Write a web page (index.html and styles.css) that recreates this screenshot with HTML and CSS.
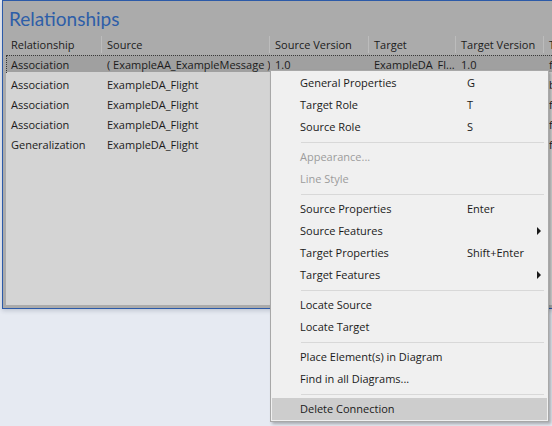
FILE: index.html
```html
<!DOCTYPE html>
<html>
<head>
<meta charset="utf-8">
<link rel="stylesheet" href="styles.css">
</head>
<body>
<div class="window">
  <div class="title">Relationships</div>
  <div class="cols header">
    <div class="hcell">Relationship</div>
    <div class="hcell">Source</div>
    <div class="hcell">Source Version</div>
    <div class="hcell">Target</div>
    <div class="hcell">Target Version</div>
    <div class="hcell last">Type</div>
  </div>
  <div class="list">
    <div class="cols row selected">
      <div class="cell">Association</div>
      <div class="cell">( ExampleAA_ExampleMessage )</div>
      <div class="cell">1.0</div>
      <div class="cell">ExampleDA_Fl...</div>
      <div class="cell">1.0</div>
      <div class="cell">from</div>
    </div>
    <div class="cols row">
      <div class="cell">Association</div>
      <div class="cell">ExampleDA_Flight</div>
      <div class="cell">1.0</div>
      <div class="cell">ExampleDA_Flight</div>
      <div class="cell">1.0</div>
      <div class="cell">bi</div>
    </div>
    <div class="cols row">
      <div class="cell">Association</div>
      <div class="cell">ExampleDA_Flight</div>
      <div class="cell">1.0</div>
      <div class="cell">ExampleDA_Flight</div>
      <div class="cell">1.0</div>
      <div class="cell">from</div>
    </div>
    <div class="cols row">
      <div class="cell">Association</div>
      <div class="cell">ExampleDA_Flight</div>
      <div class="cell">1.0</div>
      <div class="cell">ExampleDA_Flight</div>
      <div class="cell">1.0</div>
      <div class="cell">from</div>
    </div>
    <div class="cols row">
      <div class="cell">Generalization</div>
      <div class="cell">ExampleDA_Flight</div>
      <div class="cell">1.0</div>
      <div class="cell">ExampleDA_Flight</div>
      <div class="cell">1.0</div>
      <div class="cell">from</div>
    </div>
  </div>
</div>

<div class="menu">
  <div class="item"><span class="label">General Properties</span><span class="key">G</span></div>
  <div class="item"><span class="label">Target Role</span><span class="key">T</span></div>
  <div class="item"><span class="label">Source Role</span><span class="key">S</span></div>
  <div class="sep"></div>
  <div class="item disabled"><span class="label">Appearance...</span></div>
  <div class="item disabled"><span class="label">Line Style</span></div>
  <div class="sep"></div>
  <div class="item"><span class="label">Source Properties</span><span class="key">Enter</span></div>
  <div class="item"><span class="label">Source Features</span><span class="arrow"></span></div>
  <div class="item"><span class="label">Target Properties</span><span class="key">Shift+Enter</span></div>
  <div class="item"><span class="label">Target Features</span><span class="arrow"></span></div>
  <div class="sep"></div>
  <div class="item"><span class="label">Locate Source</span></div>
  <div class="item"><span class="label">Locate Target</span></div>
  <div class="sep"></div>
  <div class="item"><span class="label">Place Element(s) in Diagram</span></div>
  <div class="item"><span class="label">Find in all Diagrams...</span></div>
  <div class="sep"></div>
  <div class="item hover"><span class="label">Delete Connection</span></div>
</div>
</body>
</html>
```

FILE: styles.css
```css
html, body {
  margin: 0;
  padding: 0;
}
body {
  width: 552px;
  height: 426px;
  overflow: hidden;
  background: #e6eaf2;
  font-family: "Open Sans", "Noto Sans", sans-serif;
  font-size: 11px;
  color: #1b1b1b;
  position: relative;
}
.window {
  margin-left: 2px;
  width: 620px;
  border-left: 1px solid #2c5aa8;
  border-top: 1px solid #2c5aa8;
  border-bottom: 1px solid #2c5aa8;
  background: #ababab;
  padding: 0 0 3px 3px;
  box-shadow: 0 2px 4px rgba(40, 50, 80, 0.18);
}
.title {
  height: 28px;
  padding-top: 6px;
  margin-left: -3px;
  padding-left: 6px;
  font-family: Lato, "Open Sans", sans-serif;
  font-size: 19px;
  line-height: 24px;
  color: #2e5ea8;
}
.cols {
  display: grid;
  grid-template-columns: 96px 168px 99px 87px 88px 1fr;
}
.header {
  height: 20px;
}
.hcell {
  padding-left: 5px;
  line-height: 17px;
  border-right: 1px solid #bcbcbc;
  margin: 1px 0 2px;
  white-space: nowrap;
  overflow: hidden;
}
.hcell.last {
  border-right: none;
}
.list {
  background: #d4d4d4;
  height: 250px;
}
.row {
  height: 20px;
  line-height: 20px;
}
.row.selected {
  background: linear-gradient(#a0a0a0 0, #a0a0a0 17px, transparent 17px);
  position: relative;
}
.row.selected::before {
  content: "";
  position: absolute;
  left: 0;
  top: 0;
  right: 0;
  height: 17px;
  border-top: 1px dotted #3a3a3a;
  border-left: 1px dotted #3a3a3a;
  pointer-events: none;
}
.cell {
  padding-left: 5px;
  white-space: nowrap;
  overflow: hidden;
}
.menu {
  position: absolute;
  left: 270px;
  top: 70px;
  width: 275px;
  padding: 1px;
  background: #f0f0f0;
  border: 1px solid #a8a8a8;
  box-shadow: 2px 2px 3px rgba(0, 0, 0, 0.28);
  color: #1a1a1a;
}
.item {
  display: grid;
  grid-template-columns: 167px auto;
  align-items: center;
  box-sizing: border-box;
  height: 22px;
  padding: 0 0 1px 28px;
  position: relative;
}
.item .label,
.item .key {
  white-space: nowrap;
}
.item.disabled {
  color: #9c9c9c;
}
.item.hover {
  background: #cdcdcd;
}
.arrow {
  position: absolute;
  left: 265px;
  top: 7px;
  width: 0;
  height: 0;
  border-top: 4px solid transparent;
  border-bottom: 4px solid transparent;
  border-left: 4px solid #1a1a1a;
}
.sep {
  height: 1px;
  margin: 4px 3px 3px 29px;
  background: #d8d8d8;
}
```
